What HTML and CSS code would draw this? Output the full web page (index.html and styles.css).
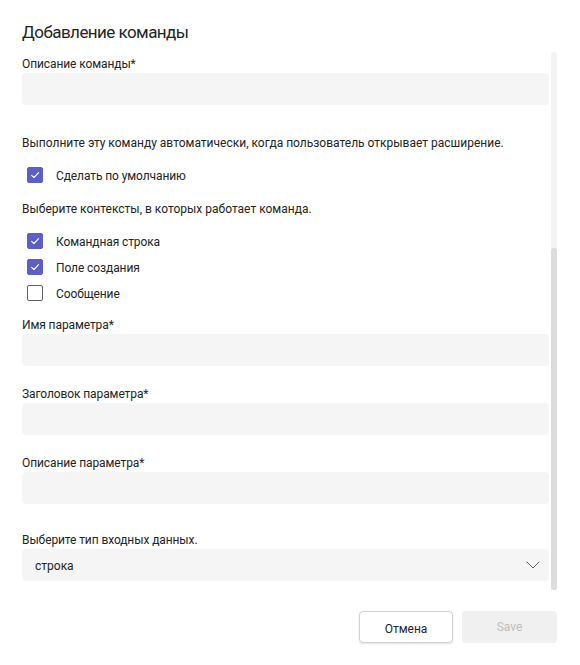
FILE: index.html
```html
<!DOCTYPE html>
<html lang="ru">
<head>
<meta charset="utf-8">
<title>Добавление команды</title>
<link rel="stylesheet" href="styles.css">
</head>
<body>
<div class="dialog">
  <h1 class="title">Добавление команды</h1>
  <div class="scroll">
    <div class="content">
      <div class="field first">
        <div class="label">Описание команды*</div>
        <div class="input"></div>
      </div>
      <p class="text auto">Выполните эту команду автоматически, когда пользователь открывает расширение.</p>
      <div class="check-row one">
        <span class="box checked"><svg viewBox="0 0 16 16" width="16" height="16"><path d="M4.6 8.3 L7 10.5 L11.6 5.6" fill="none" stroke="#fff" stroke-width="1.1" stroke-linecap="round" stroke-linejoin="round"/></svg></span>
        <span class="check-label">Сделать по умолчанию</span>
      </div>
      <p class="text ctx">Выберите контексты, в которых работает команда.</p>
      <div class="checks">
        <div class="check-row">
          <span class="box checked"><svg viewBox="0 0 16 16" width="16" height="16"><path d="M4.6 8.3 L7 10.5 L11.6 5.6" fill="none" stroke="#fff" stroke-width="1.1" stroke-linecap="round" stroke-linejoin="round"/></svg></span>
          <span class="check-label">Командная строка</span>
        </div>
        <div class="check-row">
          <span class="box checked"><svg viewBox="0 0 16 16" width="16" height="16"><path d="M4.6 8.3 L7 10.5 L11.6 5.6" fill="none" stroke="#fff" stroke-width="1.1" stroke-linecap="round" stroke-linejoin="round"/></svg></span>
          <span class="check-label">Поле создания</span>
        </div>
        <div class="check-row">
          <span class="box"></span>
          <span class="check-label">Сообщение</span>
        </div>
      </div>
      <div class="field p1">
        <div class="label">Имя параметра*</div>
        <div class="input"></div>
      </div>
      <div class="field p2">
        <div class="label">Заголовок параметра*</div>
        <div class="input"></div>
      </div>
      <div class="field p3">
        <div class="label">Описание параметра*</div>
        <div class="input"></div>
      </div>
      <div class="field p4">
        <div class="label">Выберите тип входных данных.</div>
        <div class="input select">
          <span class="value">строка</span>
          <svg class="chev" viewBox="0 0 14 8" width="14" height="8"><path d="M1 1 L7 7 L13 1" fill="none" stroke="#616161" stroke-width="1" stroke-linecap="round" stroke-linejoin="round"/></svg>
        </div>
      </div>
    </div>
    <div class="scrollbar">
      <div class="thumb"></div>
    </div>
  </div>
  <div class="actions">
    <button class="btn cancel">Отмена</button>
    <button class="btn save" disabled>Save</button>
  </div>
</div>
</body>
</html>
```

FILE: styles.css
```css
* { box-sizing: border-box; }
html, body {
  margin: 0;
  padding: 0;
  background: #ffffff;
}
body {
  font-family: "Segoe UI", Roboto, "Noto Sans", sans-serif;
  color: #242424;
  width: 580px;
  height: 665px;
  overflow: hidden;
}
.dialog {
  padding: 20px 23px 0 22px;
}
.title {
  margin: 0;
  font-size: 17px;
  letter-spacing: -0.55px;
  font-weight: 400;
  line-height: 24px;
  height: 32px;
}
.scroll {
  display: flex;
  gap: 2px;
  height: 538px;
}
.content {
  flex: 1;
  padding-top: 4px;
}
.label {
  font-size: 12px;
  line-height: 16px;
  margin-bottom: 1px;
  letter-spacing: -0.1px;
}
.input {
  height: 32px;
  background: #f5f5f5;
  border-radius: 4px;
}
.text {
  margin: 0;
  font-size: 12px;
  line-height: 16px;
}
.auto { margin-top: 30px; }
.ctx { margin-top: 18px; }
.check-row {
  display: flex;
  align-items: center;
  gap: 13px;
  padding-left: 5px;
  height: 16px;
}
.check-row.one { margin-top: 16px; }
.checks {
  display: flex;
  flex-direction: column;
  gap: 10px;
  margin-top: 16px;
}
.box {
  width: 16px;
  height: 16px;
  border: 1px solid #616161;
  border-radius: 2px;
  display: flex;
  flex: none;
}
.box.checked {
  background: #5b5fc7;
  border-color: #5b5fc7;
}
.box svg { margin: -1px; }
.check-label {
  font-size: 12px;
  line-height: 16px;
  padding-top: 2px;
  letter-spacing: -0.1px;
}
.p1 { margin-top: 16px; }
.p2 { margin-top: 20px; }
.p3 { margin-top: 20px; }
.p4 { margin-top: 28px; }
.select {
  display: flex;
  align-items: center;
  justify-content: space-between;
  padding: 2px 9px 0 13px;
}
.value {
  font-size: 12px;
  line-height: 16px;
}
.chev { margin-top: -2px; }
.scrollbar {
  width: 6px;
  flex: none;
  background: #f3f3f3;
  border-radius: 3px;
  display: flex;
  flex-direction: column;
  justify-content: flex-end;
}
.thumb {
  height: 342px;
  background: #dcdcdc;
  border-radius: 3px;
}
.actions {
  display: flex;
  justify-content: flex-end;
  gap: 9px;
  margin-top: 21px;
}
.btn {
  font-family: inherit;
  font-size: 12px;
  height: 32px;
  border-radius: 4px;
  padding: 0;
}
.cancel {
  width: 94px;
  background: #ffffff;
  color: #242424;
  border: 1px solid #d1d1d1;
  box-shadow: 0 1px 2px rgba(0,0,0,0.12);
  padding-top: 4px;
}
.save {
  width: 95px;
  background: #f0f0f0;
  color: #bdbdbd;
  border: none;
}
```
